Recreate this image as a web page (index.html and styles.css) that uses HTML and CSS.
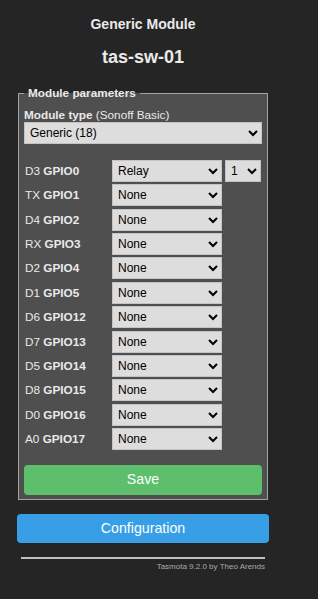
FILE: index.html
```html
<!DOCTYPE html>
<html lang="en">
<head>
    <meta charset="UTF-8">
    <meta name="viewport" content="width=device-width, initial-scale=1.0">
    <title>tas-sw-01 - Module</title>
    <link rel="stylesheet" href="styles.css">
</head>
<body>
    <div class="page">
        <div class="title">
            <h3>Generic Module</h3>
            <h2>tas-sw-01</h2>
        </div>

        <fieldset class="module">
            <legend>Module parameters</legend>
            <form method="get" action="md">
                <div class="type-label"><b>Module type</b> (Sonoff Basic)</div>
                <select class="type-select" name="g99">
                    <option selected>Generic (18)</option>
                </select>

                <div class="gpio">
                    <div class="pin">D3 <b>GPIO0</b></div>
                    <select name="g0"><option selected>Relay</option></select>
                    <select class="index" name="h0"><option selected>1</option></select>

                    <div class="pin">TX <b>GPIO1</b></div>
                    <select name="g1"><option>None</option></select>

                    <div class="pin">D4 <b>GPIO2</b></div>
                    <select name="g2"><option>None</option></select>

                    <div class="pin">RX <b>GPIO3</b></div>
                    <select name="g3"><option>None</option></select>

                    <div class="pin">D2 <b>GPIO4</b></div>
                    <select name="g4"><option>None</option></select>

                    <div class="pin">D1 <b>GPIO5</b></div>
                    <select name="g5"><option>None</option></select>

                    <div class="pin">D6 <b>GPIO12</b></div>
                    <select name="g12"><option>None</option></select>

                    <div class="pin">D7 <b>GPIO13</b></div>
                    <select name="g13"><option>None</option></select>

                    <div class="pin">D5 <b>GPIO14</b></div>
                    <select name="g14"><option>None</option></select>

                    <div class="pin">D8 <b>GPIO15</b></div>
                    <select name="g15"><option>None</option></select>

                    <div class="pin">D0 <b>GPIO16</b></div>
                    <select name="g16"><option>None</option></select>

                    <div class="pin">A0 <b>GPIO17</b></div>
                    <select name="g17"><option>None</option></select>
                </div>

                <button name="save" type="submit" class="button bgrn">Save</button>
            </form>
        </fieldset>

        <form action="cn" method="get">
            <button class="button config">Configuration</button>
        </form>

        <div class="footer">
            <hr>
            <a href="#">Tasmota 9.2.0 by Theo Arends</a>
        </div>
    </div>
</body>
</html>
```

FILE: styles.css
```css
body {
    margin: 0;
    background: #252525;
    color: #eaeaea;
    font-family: "Liberation Sans", Arial, sans-serif;
    font-size: 11.75px;
}

.page {
    width: 252px;
    margin-left: 17px;
}

.title {
    text-align: center;
}

.title h3 {
    font-size: 14px;
    line-height: 17px;
    margin: 16px 0 0 0;
}

.title h2 {
    font-size: 18px;
    line-height: 21px;
    margin: 14px 0 0 0;
}

.module {
    margin: 18px 1px 0 1px;
    padding: 8px 5px 4px 5px;
    border: 1px solid #a2a2a2;
    background: #4f4f4f;
    min-width: 0;
}

.module legend {
    font-weight: bold;
    line-height: 14px;
    padding: 0 4px;
}

.type-label {
    line-height: 14px;
}

select {
    display: block;
    box-sizing: border-box;
    width: 100%;
    height: 22px;
    margin: 0;
    padding: 0 1px;
    background: #dddddd;
    color: #000000;
    border: 1px solid #c4c4c4;
    border-radius: 0;
    font-family: "Liberation Sans", Arial, sans-serif;
    font-size: 12px;
}

.gpio {
    display: grid;
    grid-template-columns: 85px 110px 36px;
    column-gap: 3px;
    row-gap: 2.36px;
    margin-top: 16px;
}

.gpio .pin {
    grid-column: 1;
    line-height: 22px;
    padding-left: 1px;
}

.gpio select {
    grid-column: 2;
}

.gpio select.index {
    grid-column: 3;
}

.button {
    display: block;
    width: 100%;
    border: 0;
    border-radius: 4px;
    color: #faffff;
    font-family: "Liberation Sans", Arial, sans-serif;
    font-size: 14.2px;
    line-height: 29px;
    padding: 0;
    cursor: pointer;
}

.bgrn {
    background: #5dbf6b;
    margin-top: 15px;
    height: 30px;
}

.config {
    background: #389fe6;
    margin-top: 14px;
}

.footer {
    text-align: right;
    font-size: 8px;
    line-height: 10px;
    padding: 0 4px;
}

.footer hr {
    border: 0;
    border-top: 2px solid #c0c0c0;
    margin: 14px 0 3px 0;
}

.footer a {
    color: #aaaaaa;
    text-decoration: none;
}
```
